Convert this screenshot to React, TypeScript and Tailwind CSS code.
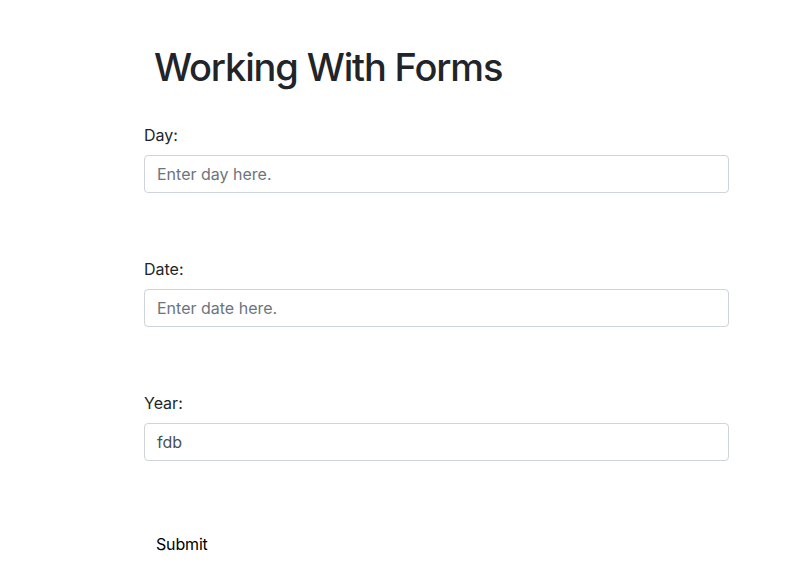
import { useState } from "react";

const font = { fontFamily: "Inter, 'Liberation Sans', sans-serif" };

function Field({ label, placeholder, value, onChange }: { label: string; placeholder: string; value: string; onChange: (v: string) => void }) {
  return (
    <div className="flex flex-col">
      <label className="mb-2 text-base leading-6 text-[#212529]">{label}</label>
      <input
        className="h-[38px] w-full rounded border border-[#ced4da] bg-white px-3 text-base text-[#495057] outline-none placeholder:text-[#6c757d]"
        placeholder={placeholder}
        value={value}
        onChange={(e) => onChange(e.target.value)}
      />
    </div>
  );
}

export default function App() {
  const [day, setDay] = useState("");
  const [date, setDate] = useState("");
  const [year, setYear] = useState("fdb");

  return (
    <div className="min-h-screen bg-white text-[#212529]" style={font}>
      <div className="ml-[144px] w-[585px] pt-[43px]">
        <h1 className="ml-[10px] text-[38px] font-medium leading-[48px] tracking-[-0.03em]">Working With Forms</h1>
        <form className="mt-[32px] flex flex-col gap-[64px]" onSubmit={(e) => e.preventDefault()}>
          <Field label="Day:" placeholder="Enter day here." value={day} onChange={setDay} />
          <Field label="Date:" placeholder="Enter date here." value={date} onChange={setDate} />
          <Field label="Year:" placeholder="Enter year here." value={year} onChange={setYear} />
          <div className="mt-px">
            <button type="submit" className="px-3 py-1.5 text-base leading-6 tracking-[-0.01em] text-black">Submit</button>
          </div>
        </form>
      </div>
    </div>
  );
}
